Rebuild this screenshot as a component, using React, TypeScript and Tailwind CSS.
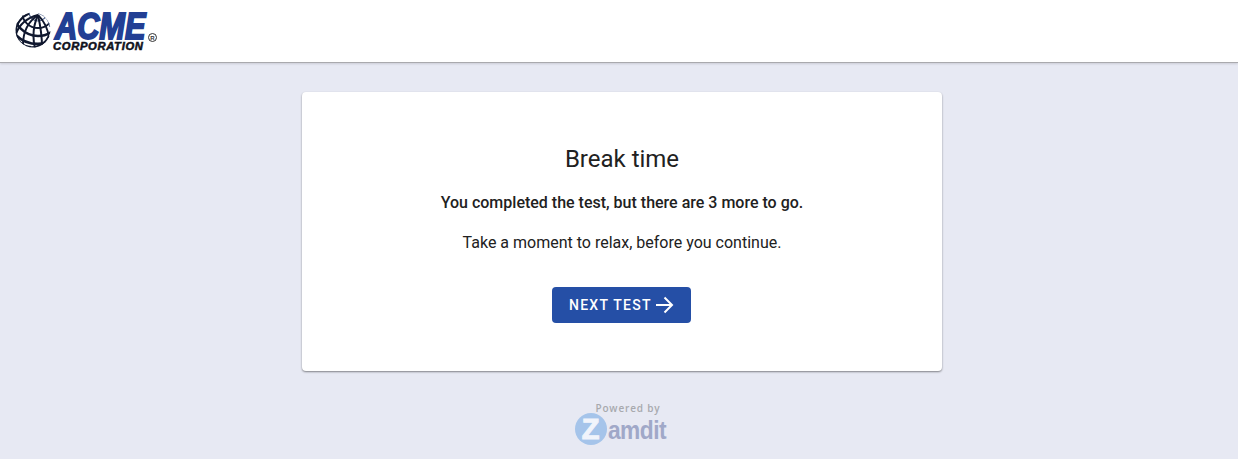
import React from "react";

function Globe() {
  return (
    <svg width="36" height="36" viewBox="0 0 36 36" className="block">
      <defs>
        <clipPath id="g"><circle cx="18" cy="18" r="17.5" /></clipPath>
      </defs>
      <g clipPath="url(#g)" fill="none" stroke="#10182f">
        <circle cx="23" cy="0" r="9" stroke="#56688f" strokeWidth="1.2" />
        <circle cx="23" cy="0" r="16" strokeWidth="1.9" />
        <circle cx="23" cy="0" r="24" strokeWidth="2.4" />
        <circle cx="23" cy="0" r="32" strokeWidth="2.8" />
        <path d="M23 3C12 6 4 13 1 22" strokeWidth="2" />
        <path d="M23 3C14 9 8 18 8 33" strokeWidth="2" />
        <path d="M23 3C19 12 17 24 20 36" strokeWidth="2" />
        <path d="M23 3C25 12 27 22 27 35" strokeWidth="2" />
        <path d="M23 3C29 9 33 16 34 26" strokeWidth="1.8" />
        <path d="M14 1.5C6 5 0.8 12 0.8 20C1 28 7 34.5 16 35.2C24 35.6 31 31 34 24" strokeWidth="2.2" />
        <path d="M23 1C29 3 34 8 35 15" stroke="#56688f" strokeWidth="1.2" />
      </g>
    </svg>
  );
}

function Logo() {
  return (
    <div className="flex items-start ml-[15px] mt-[12px]">
      <Globe />
      <div className="relative w-[107px] h-[40px]">
        <span className="absolute left-[4px] top-[0px] origin-left scale-x-[0.83] font-['Liberation_Sans',sans-serif] text-[37px] leading-[30px] font-bold italic text-[#223f94] [-webkit-text-stroke:2px_#223f94]">ACME</span>
        <span className="absolute left-[2px] top-[30px] origin-left scale-x-[1.12] font-['Liberation_Sans',sans-serif] text-[10px] leading-[10px] font-bold italic text-[#10121c] tracking-[0.6px] [-webkit-text-stroke:0.5px_#10121c]">CORPORATION</span>
        <span className="absolute left-[97px] top-[21px] w-[9px] h-[9px] rounded-full border border-[#333] flex items-center justify-center font-['Liberation_Sans',sans-serif] text-[6px] leading-none font-bold text-[#333]">R</span>
      </div>
    </div>
  );
}

function Zamdit() {
  return (
    <div className="flex flex-col items-center mt-[31px] -ml-[2px]">
      <div className="ml-[14px] font-['Open_Sans',sans-serif] font-semibold text-[10px] leading-[12px] tracking-[0.85px] text-[#a8a9ae]">Powered by</div>
      <div className="flex items-center h-[32px] -mt-[1px]">
        <div className="w-[32px] h-[32px] rounded-full bg-[#a5c4ea] flex items-center justify-center">
          <span className="font-['Liberation_Sans',sans-serif] font-bold text-[29px] leading-none text-[#f1f4fb] [-webkit-text-stroke:1px_#f1f4fb]">Z</span>
        </div>
        <span className="w-[60px] ml-[1px] mt-[3px] origin-left scale-x-[0.91] font-['Liberation_Sans',sans-serif] font-bold text-[25px] leading-none tracking-[-0.6px] text-[#a0a8c8]">amdit</span>
      </div>
    </div>
  );
}

export default function App() {
  return (
    <div className="h-[459px] overflow-hidden bg-[#e7e9f3] font-['Roboto',sans-serif] flex flex-col">
      <header className="h-[63px] shrink-0 bg-white border-b border-[#a9a9ad] shadow-[0_1px_2px_rgba(0,0,0,0.12)]">
        <Logo />
      </header>
      <main className="flex flex-col items-center pt-[29px] pl-[6px]">
        <div className="w-[640px] h-[279px] bg-white rounded-[4px] shadow-[0_1px_2px_rgba(0,0,0,0.45)] flex flex-col items-center text-[#212121]">
          <h1 className="mt-[51px] text-[24px] leading-[32px] font-normal">Break time</h1>
          <p className="mt-[16px] text-[16px] leading-[24px] font-medium">You completed the test, but there are 3 more to go.</p>
          <p className="mt-[16px] text-[16px] leading-[24px]">Take a moment to relax, before you continue.</p>
          <button className="mt-[32px] -ml-px w-[139px] h-[36px] rounded-[4px] bg-[#254fa6] text-white flex items-center pl-[17px] gap-[2px] text-[14px] font-medium tracking-[1.25px]">
            <span>NEXT TEST</span>
            <svg width="20" height="20" viewBox="0 0 20 20" fill="none" stroke="white" strokeWidth="2" className="block">
              <path d="M2 10H18M10.5 2.5L18 10L10.5 17.5" />
            </svg>
          </button>
        </div>
        <Zamdit />
      </main>
    </div>
  );
}
